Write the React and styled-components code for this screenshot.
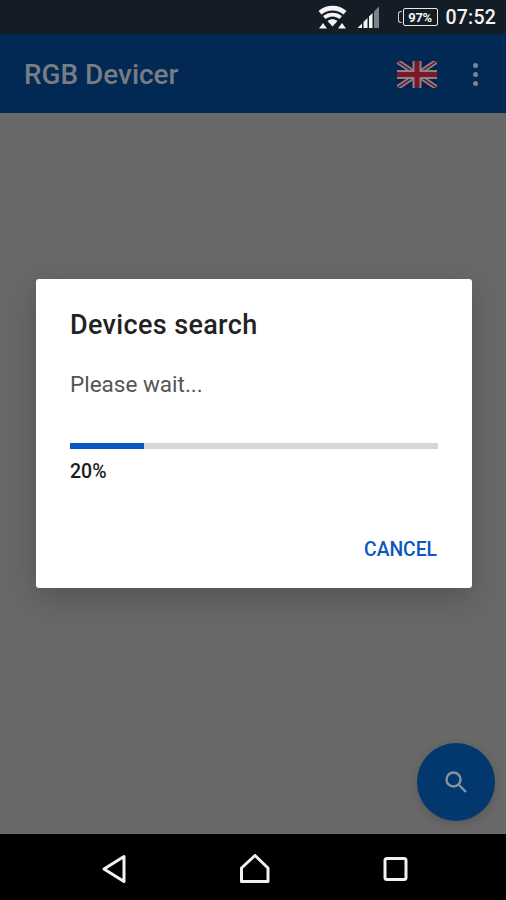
import React from 'react';
import styled, { createGlobalStyle } from 'styled-components';

const GlobalStyle = createGlobalStyle`
    html, body {
        margin: 0;
        padding: 0;
        background-color: #686868;
    }
    body {
        font-family: Roboto, "Liberation Sans", sans-serif;
    }
`

const Screen = styled.div`
    width: 506px;
    height: 900px;
    display: flex;
    flex-direction: column;
    overflow: hidden;
`

const StatusBar = styled.div`
    height: 34px;
    flex: none;
    background-color: #141c26;
    display: flex;
    align-items: center;
    justify-content: flex-end;
    padding-right: 10px;
    box-sizing: border-box;
    color: #f4f4f4;
`

const Clock = styled.span`
    font-size: 19.5px;
    font-weight: 500;
    margin-left: 8px;
    letter-spacing: 0.2px;
`

const WifiIcon = styled.svg`
    width: 29px;
    height: 24px;
    margin-right: 10px;
`

const SignalIcon = styled.svg`
    width: 23px;
    height: 23px;
    margin-right: 23px;
`

const Battery = styled.div`
    position: relative;
    width: 35px;
    height: 18px;
    box-sizing: border-box;
    border: 1.5px solid #e8e8e8;
    border-radius: 2px;
    display: flex;
    align-items: center;
    justify-content: center;
    font-size: 13px;
    font-weight: 700;
    line-height: 1;
    letter-spacing: -0.4px;
    &::before {
        content: '';
        position: absolute;
        left: -6px;
        top: 2px;
        width: 3px;
        height: 10px;
        border: 1.5px solid #c8c8c8;
        border-right: 0;
        border-radius: 3px 0 0 3px;
    }
`

const AppBar = styled.header`
    height: 79px;
    flex: none;
    background-color: #012953;
    display: flex;
    align-items: center;
    padding: 2px 24px 0;
    box-sizing: border-box;
`

const Title = styled.h1`
    flex: 1;
    margin: 0;
    font-size: 27.9px;
    font-weight: 500;
    color: #777d85;
`

const Flag = styled.svg`
    width: 40px;
    height: 27px;
    margin-right: 36px;
`

const MenuDots = styled.div`
    display: flex;
    flex-direction: column;
    gap: 3.5px;
    margin-right: 4px;
    span {
        width: 5.5px;
        height: 5.5px;
        border-radius: 50%;
        background-color: #7d838b;
    }
`

const Main = styled.main`
    position: relative;
    flex: 1;
    padding-top: 166px;
    background-color: #686868;
`

const Dialog = styled.section`
    width: 436px;
    height: 309px;
    margin-left: 36px;
    padding: 31px 34px 0;
    box-sizing: border-box;
    background-color: #fff;
    border-radius: 3px;
    box-shadow: 0 10px 30px rgba(0, 0, 0, 0.2);
    display: flex;
    flex-direction: column;
`

const DialogTitle = styled.h2`
    margin: 0;
    font-size: 27px;
    line-height: 31px;
    font-weight: 500;
    letter-spacing: 0.35px;
    color: #222;
`

const Message = styled.p`
    margin: 31px 0 0;
    font-size: 22.5px;
    line-height: 25px;
    color: #555;
`

const Track = styled.div`
    height: 6px;
    margin-top: 46px;
    background-color: #d6d6d6;
`

const Fill = styled.div`
    height: 100%;
    background-color: #0a57c4;
`

const Percent = styled.div`
    margin-top: 12px;
    font-size: 19.5px;
    line-height: 22px;
    font-weight: 500;
    color: #1c1c1c;
`

const Actions = styled.div`
    margin-top: 55px;
    margin-right: 1px;
    display: flex;
    justify-content: flex-end;
`

const TextButton = styled.button`
    border: 0;
    padding: 0;
    background: none;
    font: 500 19.3px/24px Roboto, sans-serif;
    color: #0a57c4;
`

const Fab = styled.button`
    position: absolute;
    right: 11px;
    bottom: 13px;
    width: 78px;
    height: 78px;
    border: 0;
    border-radius: 50%;
    padding: 0;
    background-color: #03386e;
    box-shadow: 0 3px 8px rgba(0, 0, 0, 0.15);
    display: flex;
    align-items: center;
    justify-content: center;
`

const NavBar = styled.nav`
    height: 66px;
    flex: none;
    background-color: #000;
    display: grid;
    grid-template-columns: repeat(3, 141px);
    padding: 4px 0 0 43px;
    box-sizing: border-box;
    align-items: center;
    justify-items: center;
    svg {
        width: 30px;
        height: 30px;
    }
`

const ProgressDialog = ({ percent }) => (
    <Dialog>
        <DialogTitle>Devices search</DialogTitle>
        <Message>Please wait...</Message>
        <Track>
            <Fill style={{ width: `${percent}%` }} />
        </Track>
        <Percent>{percent}%</Percent>
        <Actions>
            <TextButton type="button">CANCEL</TextButton>
        </Actions>
    </Dialog>
)

const App = () => {
    return (
        <Screen>
            <GlobalStyle />
            <StatusBar>
                <WifiIcon viewBox="0 0 29 24">
                    <path d="M0.5 6 C8 -1 21 -1 28.5 6 L25.5 9.5 C19 4 10 4 3.5 9.5 Z" fill="#f4f4f4" />
                    <path d="M5 11 C10.5 6.5 18.5 6.5 24 11 L21.5 14 C17 10.5 12 10.5 7.5 14 Z" fill="#f4f4f4" />
                    <path d="M9.5 16 C12.5 13.5 16.5 13.5 19.5 16 L14.5 21.5 Z" fill="#f4f4f4" />
                    <path d="M5 18 L9 23.5 L1 23.5 Z M24 18 L28 23.5 L20 23.5 Z" fill="#f4f4f4" />
                </WifiIcon>
                <SignalIcon viewBox="0 0 23 23">
                    <path d="M0.5 22 L5 17.5 V22 Z M6.5 22 V16 L10.5 12 V22 Z M12 22 V10.5 L15.5 7 V22 Z" fill="#f4f4f4" />
                    <path d="M17 22 V5.5 L22 0.5 V22 Z" fill="#7b828a" />
                </SignalIcon>
                <Battery>97%</Battery>
                <Clock>07:52</Clock>
            </StatusBar>
            <AppBar>
                <Title>RGB Devicer</Title>
                <Flag viewBox="0 0 40 27">
                    <rect width="40" height="27" fill="#101c4c" />
                    <path d="M0 0 L40 27 M40 0 L0 27" stroke="#85858a" strokeWidth="5" />
                    <path d="M0 0 L40 27 M40 0 L0 27" stroke="#6e1a2a" strokeWidth="1.6" />
                    <path d="M20 0 V27 M0 13.5 H40" stroke="#85858a" strokeWidth="9" />
                    <path d="M20 0 V27 M0 13.5 H40" stroke="#7e1626" strokeWidth="5" />
                </Flag>
                <MenuDots>
                    <span />
                    <span />
                    <span />
                </MenuDots>
            </AppBar>
            <Main>
                <ProgressDialog percent={20} />
                <Fab type="button" aria-label="Search">
                    <svg width="26" height="26" viewBox="0 0 26 26" fill="none" stroke="#8a929c" strokeWidth="2.4">
                        <circle cx="10.5" cy="10.5" r="7" />
                        <path d="M15.5 15.5 L23 23" />
                    </svg>
                </Fab>
            </Main>
            <NavBar>
                <svg viewBox="0 0 30 30" fill="none" stroke="#f2f2f2" strokeWidth="3" strokeLinejoin="round">
                    <path d="M5 15 L25 2.5 V27.5 Z" />
                </svg>
                <svg viewBox="0 0 30 30" fill="none" stroke="#f2f2f2" strokeWidth="3" strokeLinejoin="round">
                    <path d="M15 1.5 L28 14 V27.5 H1.5 V14 Z" />
                </svg>
                <svg viewBox="0 0 30 30" fill="none" stroke="#f2f2f2" strokeWidth="3" strokeLinejoin="round">
                    <rect x="4" y="4.5" width="21" height="21" rx="2" />
                </svg>
            </NavBar>
        </Screen>
    )
}

export default App;
